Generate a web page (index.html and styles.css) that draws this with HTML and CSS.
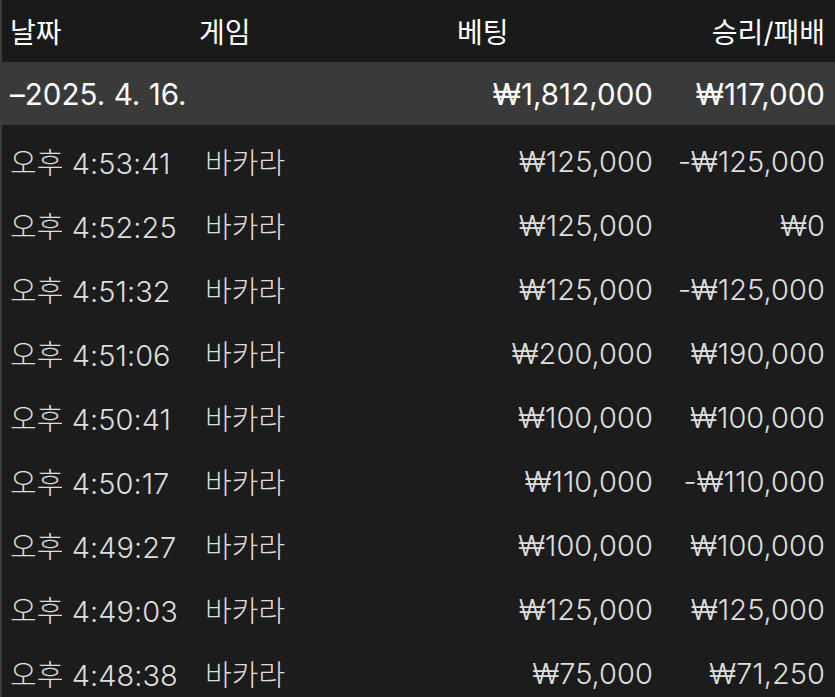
FILE: index.html
```html
<!DOCTYPE html>
<html lang="ko">
<head>
  <meta charset="UTF-8">
  <meta name="viewport" content="width=device-width, initial-scale=1.0">
  <title>베팅 내역</title>
  <link rel="stylesheet" href="styles.css">
</head>
<body>
  <div class="history">
    <div class="row head">
      <span class="c-date">날짜</span>
      <span class="c-game">게임</span>
      <span class="c-bet">베팅</span>
      <span class="c-win">승리/패배</span>
    </div>
    <div class="row day">
      <span class="c-date">–2025. 4. 16.</span>
      <span class="c-game"></span>
      <span class="c-bet">₩1,812,000</span>
      <span class="c-win">₩117,000</span>
    </div>
    <div class="rows">
      <div class="row item">
        <span class="c-date">오후 4:53:41</span>
        <span class="c-game">바카라</span>
        <span class="c-bet">₩125,000</span>
        <span class="c-win">-₩125,000</span>
      </div>
      <div class="row item">
        <span class="c-date">오후 4:52:25</span>
        <span class="c-game">바카라</span>
        <span class="c-bet">₩125,000</span>
        <span class="c-win">₩0</span>
      </div>
      <div class="row item">
        <span class="c-date">오후 4:51:32</span>
        <span class="c-game">바카라</span>
        <span class="c-bet">₩125,000</span>
        <span class="c-win">-₩125,000</span>
      </div>
      <div class="row item">
        <span class="c-date">오후 4:51:06</span>
        <span class="c-game">바카라</span>
        <span class="c-bet">₩200,000</span>
        <span class="c-win">₩190,000</span>
      </div>
      <div class="row item">
        <span class="c-date">오후 4:50:41</span>
        <span class="c-game">바카라</span>
        <span class="c-bet">₩100,000</span>
        <span class="c-win">₩100,000</span>
      </div>
      <div class="row item">
        <span class="c-date">오후 4:50:17</span>
        <span class="c-game">바카라</span>
        <span class="c-bet">₩110,000</span>
        <span class="c-win">-₩110,000</span>
      </div>
      <div class="row item">
        <span class="c-date">오후 4:49:27</span>
        <span class="c-game">바카라</span>
        <span class="c-bet">₩100,000</span>
        <span class="c-win">₩100,000</span>
      </div>
      <div class="row item">
        <span class="c-date">오후 4:49:03</span>
        <span class="c-game">바카라</span>
        <span class="c-bet">₩125,000</span>
        <span class="c-win">₩125,000</span>
      </div>
      <div class="row item">
        <span class="c-date">오후 4:48:38</span>
        <span class="c-game">바카라</span>
        <span class="c-bet">₩75,000</span>
        <span class="c-win">₩71,250</span>
      </div>
    </div>
  </div>
</body>
</html>
```

FILE: styles.css
```css
:root {
  --bg: #1c1c1c;
  --head-bg: #1a1a1a;
  --day-bg: #3a3a3a;
  --edge: #3c3c3c;
  --text: #dedede;
  --bright: #ffffff;
}

html, body {
  margin: 0;
  padding: 0;
  background: var(--bg);
  height: 100%;
  overflow: hidden;
}

body {
  font-family: Inter, "Noto Sans CJK KR", sans-serif;
  font-size: 29px;
  font-weight: 300;
  letter-spacing: 0.05px;
  color: var(--text);
}

.history {
  border-left: 2px solid var(--edge);
  min-height: 100vh;
}

.row {
  display: grid;
  grid-template-columns: 188px 255px 200px 1fr;
  align-items: center;
  padding: 0 10px 0 8px;
  white-space: nowrap;
}

.c-bet, .c-win {
  text-align: right;
}

.head {
  height: 62px;
  background: var(--head-bg);
  color: var(--bright);
  font-size: 28px;
  font-weight: 400;
  letter-spacing: 0;
}

.head .c-game {
  padding-left: 1px;
}

.head .c-bet {
  text-align: left;
  padding-left: 4px;
}

.day {
  height: 63px;
  background: var(--day-bg);
  color: var(--bright);
  font-size: 29.5px;
  font-weight: 400;
}

.rows {
  padding-top: 4px;
}

.item {
  height: 64px;
}

.item .c-game {
  padding-left: 7px;
}
```
